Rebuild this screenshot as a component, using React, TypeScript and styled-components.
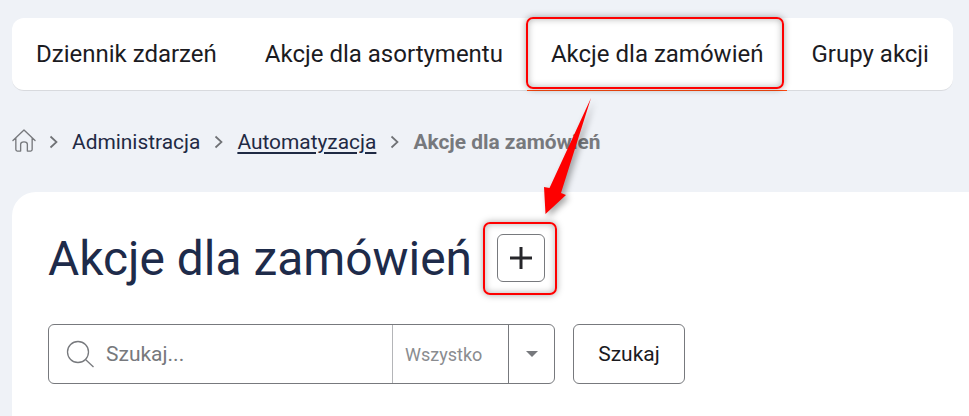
import React from "react";
import styled, { createGlobalStyle } from "styled-components";

const Global = createGlobalStyle`
  html, body { margin: 0; padding: 0; background: #eff2f7; }
  body { font-family: Roboto, "Liberation Sans", sans-serif; overflow: hidden; }
  #root { width: 969px; height: 416px; overflow: hidden; position: relative; }
`;

const Page = styled.div`
  width: 969px;
  height: 416px;
  padding: 18px 16px 0 12px;
  box-sizing: border-box;
  background: #eff2f7;
  position: relative;
  overflow: hidden;
  display: flex;
  flex-direction: column;
`;

const TabBar = styled.nav`
  height: 73px;
  box-sizing: border-box;
  flex: none;
  background: #fff;
  border-radius: 12px;
  border-bottom: 1px solid #d8dade;
  display: flex;
  align-items: stretch;
  padding-left: 24px;
`;

const Tab = styled.div<{ $gap: number }>`
  display: flex;
  align-items: center;
  height: 72px;
  padding-bottom: 1px;
  box-sizing: border-box;
  margin-right: ${(p) => p.$gap}px;
  font-size: 24px;
  color: #1b1b1f;
  white-space: nowrap;
`;

const Crumbs = styled.div`
  display: flex;
  align-items: center;
  height: 40px;
  margin-top: 31px;
  font-size: 20.9px;
  color: #1f2a44;
  flex: none;
`;

const CrumbLink = styled.span<{ $underline?: boolean }>`
  text-decoration: ${(p) => (p.$underline ? "underline" : "none")};
  text-underline-offset: 3px;
`;

const CrumbCurrent = styled.span`
  font-weight: 700;
  color: #77797d;
`;

const HomeIcon = styled.svg`
  width: 24px;
  height: 25px;
  flex: none;
  margin: -4px -1px 0 0;
`;

const Sep = styled.svg`
  width: 9px;
  height: 14px;
  margin: 0 14px;
  flex: none;
`;

const Card = styled.main`
  margin-top: 30px;
  margin-right: -40px;
  flex: 1;
  min-height: 300px;
  background: #fff;
  border-radius: 24px 24px 0 0;
  padding: 35px 36px 0;
`;

const TitleRow = styled.div`
  display: flex;
  align-items: center;
  height: 62px;
`;

const Title = styled.h1`
  margin: 2px 0 0;
  font-size: 47.9px;
  font-weight: 400;
  color: #1e2b4a;
  line-height: 62px;
  white-space: nowrap;
`;

const AddButton = styled.button`
  width: 48px;
  height: 48px;
  margin-left: 25px;
  padding: 0;
  background: #fff;
  border: 1px solid #77797d;
  border-radius: 6px;
  display: flex;
  align-items: center;
  justify-content: center;
`;

const SearchRow = styled.div`
  display: flex;
  margin-top: 35px;
  gap: 18px;
`;

const SearchGroup = styled.div`
  width: 507px;
  height: 60px;
  box-sizing: border-box;
  border: 1px solid #77797d;
  border-radius: 6px;
  display: flex;
  align-items: stretch;
`;

const SearchField = styled.div`
  width: 343px;
  flex: none;
  display: flex;
  align-items: center;
  padding-left: 17px;
  box-sizing: border-box;
  gap: 12px;
  font-size: 21px;
  color: #77797d;
`;

const SearchIcon = styled.svg`
  width: 28px;
  height: 28px;
  flex: none;
`;

const Filter = styled.div`
  width: 116px;
  flex: none;
  box-sizing: border-box;
  border-left: 1px solid #b4b5b8;
  display: flex;
  align-items: center;
  padding-left: 12px;
  font-size: 18px;
  color: #8a8c90;
`;

const Caret = styled.div`
  flex: 1;
  border-left: 1px solid #77797d;
  display: flex;
  align-items: center;
  justify-content: center;
  &::before {
    content: "";
    border-left: 6px solid transparent;
    border-right: 6px solid transparent;
    border-top: 6px solid #77797d;
  }
`;

const SearchButton = styled.button`
  width: 112px;
  height: 60px;
  background: #fff;
  border: 1px solid #77797d;
  border-radius: 6px;
  font-family: inherit;
  font-size: 21px;
  color: #1b1b1f;
  padding: 0;
`;

const Highlight = styled.div<{ $x: number; $y: number; $w: number; $h: number }>`
  position: absolute;
  left: ${(p) => p.$x}px;
  top: ${(p) => p.$y}px;
  width: ${(p) => p.$w}px;
  height: ${(p) => p.$h}px;
  box-sizing: border-box;
  border: 2px solid #fe0000;
  border-radius: 7px;
  box-shadow: 0 0 7px rgba(0, 0, 0, 0.35), inset 0 0 7px rgba(0, 0, 0, 0.3);
  pointer-events: none;
`;

const ActiveLine = styled.div`
  position: absolute;
  left: 527px;
  top: 90px;
  width: 260px;
  height: 1px;
  background: #ff4a10;
`;

const Arrow = styled.svg`
  position: absolute;
  left: 530px;
  top: 90px;
  width: 80px;
  height: 130px;
  overflow: visible;
  filter: drop-shadow(3px 3px 3px rgba(0, 0, 0, 0.35));
`;

const Chevron = () => (
  <Sep viewBox="0 0 9 14" fill="none" stroke="#6f7175" strokeWidth="1.7">
    <path d="M1.5 1.5 L7.5 7 L1.5 12.5" />
  </Sep>
);

export default function App() {
  return (
    <Page>
      <Global />
      <TabBar>
        <Tab $gap={48}>Dziennik zdarzeń</Tab>
        <Tab $gap={48}>Akcje dla asortymentu</Tab>
        <Tab $gap={48}>Akcje dla zamówień</Tab>
        <Tab $gap={0}>Grupy akcji</Tab>
      </TabBar>
      <Crumbs>
        <HomeIcon viewBox="0.5 1 25 24" fill="none" stroke="#77797d" strokeWidth="1.4" strokeLinejoin="round" strokeLinecap="round">
          <path d="M1.5 13 L13 2 L24.5 13 M4.5 10.5 V22.5 Q4.5 24 6 24 H9.5 V17 Q9.5 14.5 13 14.5 Q16.5 14.5 16.5 17 V24 H20 Q21.5 24 21.5 22.5 V10.5" />
        </HomeIcon>
        <Chevron />
        <CrumbLink>Administracja</CrumbLink>
        <Chevron />
        <CrumbLink $underline>Automatyzacja</CrumbLink>
        <Chevron />
        <CrumbCurrent>Akcje dla zamówień</CrumbCurrent>
      </Crumbs>
      <Card>
        <TitleRow>
          <Title>Akcje dla zamówień</Title>
          <AddButton aria-label="Dodaj">
            <svg width="24" height="24" viewBox="0 0 24 24" stroke="#26262a" strokeWidth="3" fill="none">
              <path d="M12 1 V23 M1 12 H23" />
            </svg>
          </AddButton>
        </TitleRow>
        <SearchRow>
          <SearchGroup>
            <SearchField>
              <SearchIcon viewBox="0 0 28 28" fill="none" stroke="#77797d" strokeWidth="1.3">
                <circle cx="12" cy="12" r="10.5" />
                <path d="M19.5 19.5 L27.5 27" />
              </SearchIcon>
              Szukaj...
            </SearchField>
            <Filter>Wszystko</Filter>
            <Caret />
          </SearchGroup>
          <SearchButton>Szukaj</SearchButton>
        </SearchRow>
      </Card>
      <ActiveLine />
      <Highlight $x={526} $y={17} $w={258} $h={72} />
      <Highlight $x={483} $y={222} $w={74} $h={73} />
      <Arrow viewBox="0 0 80 130">
        <path d="M61 8 L19.5 98 L14 97 L15.5 124 L36 105 L31 103 Z" fill="#fe0000" />
      </Arrow>
    </Page>
  );
}
